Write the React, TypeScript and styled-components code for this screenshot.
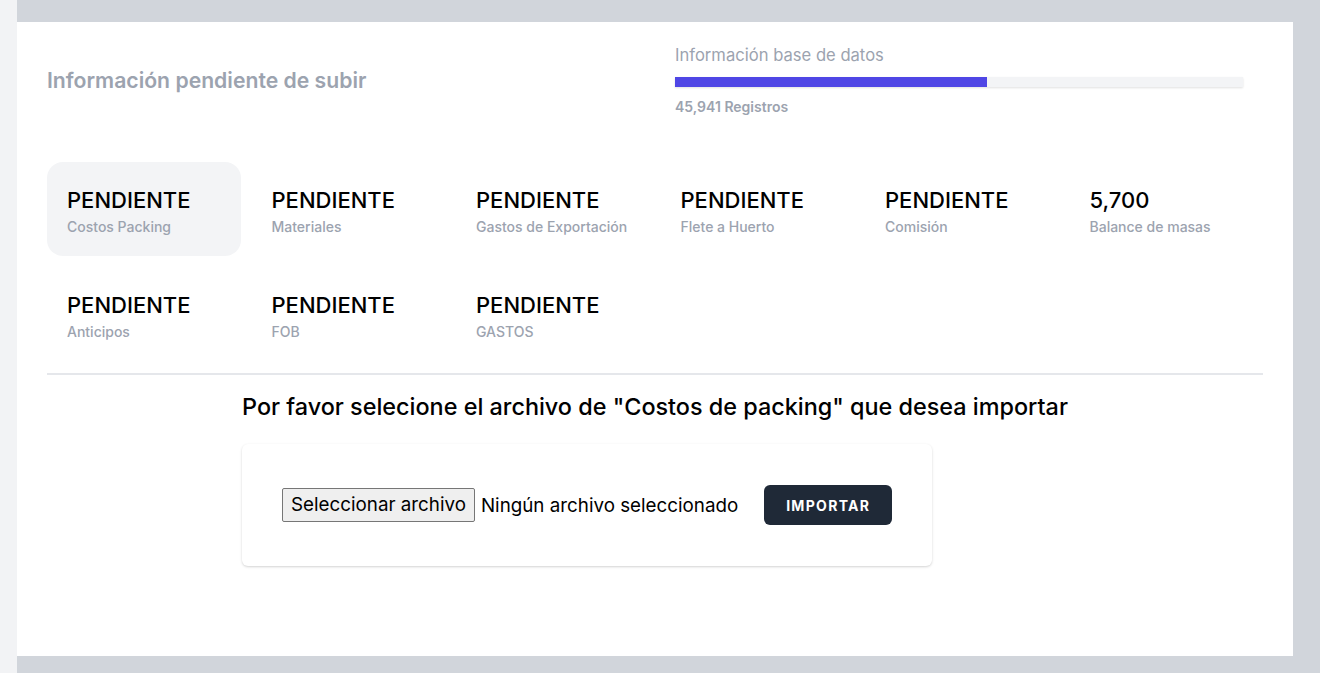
import { FC } from 'react';
import styled, { createGlobalStyle } from 'styled-components';

type stat = {
  value: string;
  label: string;
  active?: boolean;
};

const stats: stat[] = [
  { value: 'PENDIENTE', label: 'Costos Packing', active: true },
  { value: 'PENDIENTE', label: 'Materiales' },
  { value: 'PENDIENTE', label: 'Gastos de Exportación' },
  { value: 'PENDIENTE', label: 'Flete a Huerto' },
  { value: 'PENDIENTE', label: 'Comisión' },
  { value: '5,700', label: 'Balance de masas' },
  { value: 'PENDIENTE', label: 'Anticipos' },
  { value: 'PENDIENTE', label: 'FOB' },
  { value: 'PENDIENTE', label: 'GASTOS' },
];

const GlobalStyle = createGlobalStyle`
  body {
    margin: 0;
    font-family: Inter, 'Noto Sans', sans-serif;
    background: #d1d5db;
  }
`;

const App: FC = () => {
  return (
    <Layout>
      <GlobalStyle />
      <Sidebar />
      <Main>
        <Panel>
          <Header>
            <PageTitle>Información pendiente de subir</PageTitle>
            <DbInfo>
              <DbTitle>Información base de datos</DbTitle>
              <Progress>
                <ProgressFill percent={55} />
              </Progress>
              <DbCount>45,941 Registros</DbCount>
            </DbInfo>
          </Header>

          <StatGrid>
            {stats.map((s) => (
              <StatCard key={s.label} active={s.active}>
                <StatValue>{s.value}</StatValue>
                <StatLabel>{s.label}</StatLabel>
              </StatCard>
            ))}
          </StatGrid>

          <Divider />

          <Upload>
            <UploadTitle>Por favor selecione el archivo de "Costos de packing" que desea importar</UploadTitle>
            <UploadCard>
              <FileButton>Seleccionar archivo</FileButton>
              <FileName>Ningún archivo seleccionado</FileName>
              <ImportButton>Importar</ImportButton>
            </UploadCard>
          </Upload>
        </Panel>
      </Main>
    </Layout>
  );
};

export default App;

const Layout = styled.div`
  display: flex;
  min-height: 673px;
`;

const Sidebar = styled.aside`
  width: 17px;
  flex-shrink: 0;
  background: #f2f3f5;
`;

const Main = styled.main`
  flex: 1;
  background: #d1d5db;
  padding: 22px 27px 17px 0;
`;

const Panel = styled.section`
  background: #fff;
  height: 634px;
  box-sizing: border-box;
  padding: 21px 30px;
`;

const Header = styled.div`
  display: grid;
  grid-template-columns: 1fr 1fr;
  column-gap: 40px;
  align-items: center;
`;

const PageTitle = styled.h2`
  margin: 0;
  font-size: 21.2px;
  font-weight: 600;
  color: #9ca3af;
`;

const DbInfo = styled.div`
  padding-right: 20px;
`;

const DbTitle = styled.div`
  font-size: 16.6px;
  line-height: 24px;
  color: #9ca3af;
`;

const Progress = styled.div`
  margin-top: 10px;
  height: 10px;
  background: #f3f4f6;
  box-shadow: 0 1px 2px rgba(0, 0, 0, 0.12);
`;

const ProgressFill = styled.div<{ percent: number }>`
  height: 100%;
  width: ${(p) => p.percent}%;
  background: #4f46e5;
`;

const DbCount = styled.div`
  margin-top: 10px;
  font-size: 14px;
  line-height: 20px;
  font-weight: 600;
  color: #9ca3af;
`;

const StatGrid = styled.div`
  margin-top: 45px;
  display: grid;
  grid-template-columns: repeat(6, 1fr);
  gap: 11px;
`;

const StatCard = styled.div<{ active?: boolean }>`
  height: 94px;
  box-sizing: border-box;
  padding: 24px 20px 0;
  border-radius: 16px;
  background: ${(p) => (p.active ? '#f3f4f6' : 'transparent')};
`;

const StatValue = styled.div`
  font-size: 22px;
  line-height: 28px;
  font-weight: 500;
  color: #000;
`;

const StatLabel = styled.div`
  margin-top: 3px;
  font-size: 14px;
  line-height: 20px;
  font-weight: 500;
  color: #9ca3af;
`;

const Divider = styled.hr`
  margin: 12px 0 0;
  border: 0;
  border-top: 2px solid #e5e7eb;
`;

const Upload = styled.div`
  width: fit-content;
  margin: 18px auto 0;
`;

const UploadTitle = styled.h3`
  margin: 0;
  font-size: 23.4px;
  line-height: 28px;
  font-weight: 500;
  color: #000;
`;

const UploadCard = styled.div`
  margin-top: 23px;
  display: inline-flex;
  align-items: center;
  padding: 41px 40px;
  background: #fff;
  border-radius: 6px;
  box-shadow: 0 1px 3px rgba(0, 0, 0, 0.12), 0 1px 2px rgba(0, 0, 0, 0.06);
`;

const FileButton = styled.span`
  display: inline-block;
  height: 34px;
  box-sizing: border-box;
  padding: 0 8px;
  line-height: 32px;
  font-size: 18.8px;
  color: #000;
  background: #efefef;
  border: 1px solid #767676;
  border-radius: 2px;
`;

const FileName = styled.span`
  margin-left: 6px;
  font-size: 18.8px;
  color: #000;
`;

const ImportButton = styled.button`
  margin-left: 26px;
  width: 128px;
  height: 40px;
  border: 0;
  border-radius: 6px;
  background: #1f2937;
  color: #fff;
  font-family: inherit;
  font-size: 14px;
  font-weight: 700;
  letter-spacing: 1.3px;
  text-transform: uppercase;
`;
